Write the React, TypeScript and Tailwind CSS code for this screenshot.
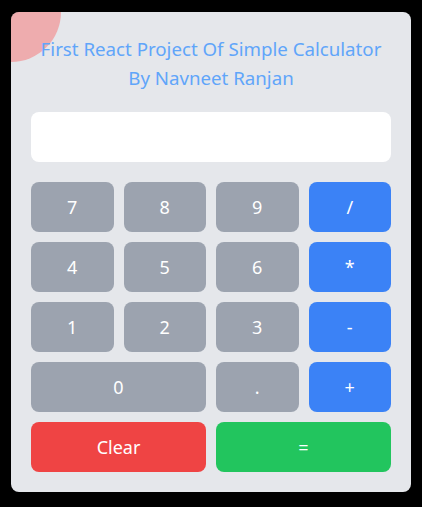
import React from "react";

const gray = "bg-[#9ca3af]";
const blue = "bg-[#3b82f6]";

export default function App() {
  const rows: { label: string; cls: string; span?: boolean }[] = [
    { label: "7", cls: gray },
    { label: "8", cls: gray },
    { label: "9", cls: gray },
    { label: "/", cls: blue },
    { label: "4", cls: gray },
    { label: "5", cls: gray },
    { label: "6", cls: gray },
    { label: "*", cls: blue },
    { label: "1", cls: gray },
    { label: "2", cls: gray },
    { label: "3", cls: gray },
    { label: "-", cls: blue },
    { label: "0", cls: gray, span: true },
    { label: ".", cls: gray },
    { label: "+", cls: blue },
    { label: "Clear", cls: "bg-[#ef4444]", span: true },
    { label: "=", cls: "bg-[#22c55e]", span: true },
  ];
  return (
    <div
      className="min-h-screen bg-black pt-3"
      style={{ fontFamily: '"Noto Sans", "Open Sans", sans-serif' }}
    >
      <div className="relative mx-auto w-[400px] h-[480px] overflow-hidden rounded-lg bg-[#e5e7eb] p-5">
        <div className="absolute -left-[50px] -top-[50px] h-[100px] w-[100px] rounded-full bg-[#f87171] opacity-50" />
        <h1 className="relative mt-0.5 mb-5 text-center text-[18.7px] leading-[29px] text-[#60a5fa]">
          First React Project Of Simple Calculator
          <br />
          By Navneet Ranjan
        </h1>
        <div className="h-[50px] w-full rounded-lg bg-white" />
        <div className="mt-5 grid grid-cols-4 gap-2.5">
          {rows.map((b) => (
            <button
              key={b.label}
              className={`${b.cls} ${b.span ? "col-span-2" : ""} h-[50px] rounded-lg text-[18px] text-white`}
            >
              {b.label}
            </button>
          ))}
        </div>
      </div>
    </div>
  );
}
